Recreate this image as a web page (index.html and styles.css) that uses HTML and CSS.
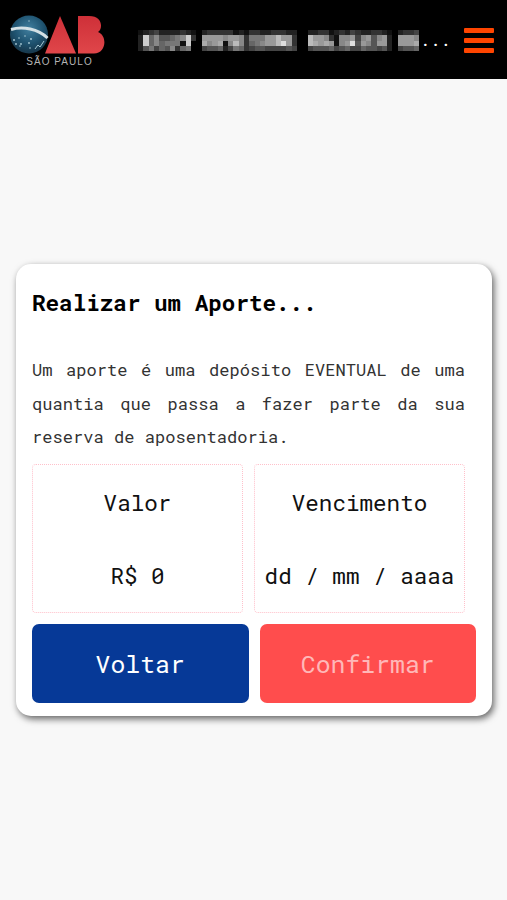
FILE: index.html
```html
<!DOCTYPE html>
<html lang="pt-BR">
<head>
    <meta charset="UTF-8">
    <meta name="viewport" content="width=device-width, initial-scale=1.0">
    <title>OAB São Paulo - Aporte</title>
    <link rel="stylesheet" href="styles.css">
</head>
<body>
    <header class="topbar">
        <div class="logo">
            <svg class="logo-mark" width="96" height="42" viewBox="0 0 96 42">
                <defs>
                    <radialGradient id="globe" cx="0.5" cy="0.35" r="0.6">
                        <stop offset="0" stop-color="#417f9f"/>
                        <stop offset="0.65" stop-color="#1e526f"/>
                        <stop offset="1" stop-color="#183b50"/>
                    </radialGradient>
                    <linearGradient id="red" x1="0" y1="0" x2="0" y2="1">
                        <stop offset="0" stop-color="#ce3038"/>
                        <stop offset="1" stop-color="#e0464a"/>
                    </linearGradient>
                </defs>
                <circle cx="20" cy="20.500" r="19" fill="url(#globe)"/>
                <path d="M2 15.500C14 12 29 15 38.500 24" fill="none" stroke="#d3e0e5" stroke-width="3"/>
                <g fill="#a8cad6">
                    <circle cx="5" cy="26" r="1"/><circle cx="7" cy="30" r="0.9"/><circle cx="12" cy="30" r="0.9"/>
                    <circle cx="10" cy="24" r="0.8"/><circle cx="16" cy="22" r="0.8"/><circle cx="20" cy="29" r="0.9"/>
                    <circle cx="22" cy="25" r="1"/><circle cx="11" cy="32" r="0.8"/><circle cx="21" cy="34" r="0.8"/>
                    <circle cx="20" cy="7" r="0.7"/>
                </g>
                <path d="M26 35l3-4 2 2 4-6" fill="none" stroke="#a8cad6" stroke-width="1"/>
                <polygon points="51,2 67,39.500 36,39.500" fill="url(#red)"/>
                <path d="M69 2H80C94 2 94 15 89 18C99 22 97 39.500 85 39.500H69Z" fill="url(#red)"/>
            </svg>
            <span class="logo-city">SÃO PAULO</span>
        </div>
        <div class="user">
            <svg class="user-name" id="userName" width="282" height="22" shape-rendering="crispEdges"></svg>
            <span class="user-more">...</span>
        </div>
        <div class="menu"><span></span><span></span><span></span></div>
    </header>

    <main class="content">
        <section class="card">
            <h1>Realizar um Aporte...</h1>
            <p>Um aporte é uma depósito EVENTUAL de uma quantia que passa a fazer parte da sua reserva de aposentadoria.</p>
            <div class="fields">
                <div class="field">
                    <label>Valor</label>
                    <span>R$ 0</span>
                </div>
                <div class="field">
                    <label>Vencimento</label>
                    <span>dd / mm / aaaa</span>
                </div>
            </div>
            <div class="buttons">
                <button class="btn-back">Voltar</button>
                <button class="btn-confirm">Confirmar</button>
            </div>
        </section>
    </main>

    <script>
        // Pixelated user name, one hex digit of grey per cell
        const rows = [
            '12342222321 233333121332233322  2233123243223321 2334',
            '2c6855678c3 99998998377799b993  b998318894895892 9998',
            '2c6867771c0 a89a18b8367899bd93  ba9a9189d5985992 999a',
            '25746583670 455624763455444454  4555645644655452 4556'
        ];
        let cells = '';
        rows.forEach((row, y) => {
            [...row].forEach((c, x) => {
                if (c === ' ') return;
                cells += `<rect x="${x * 5.3}" y="${y * 5.3}" width="5.3" height="5.3" fill="#${c}${c}${c}"/>`;
            });
        });
        document.getElementById('userName').innerHTML = cells;
    </script>
</body>
</html>
```
FILE: styles.css
```css
* {
    box-sizing: border-box;
}
body {
    margin: 0;
    min-height: 100vh;
    background-color: #f8f8f8;
    font-family: "Roboto Mono", "DejaVu Sans Mono", monospace;
    display: flex;
    flex-direction: column;
}
.topbar {
    height: 79px;
    background: #000;
    display: flex;
    align-items: flex-start;
    padding: 14px 13px 0 9px;
}
.logo {
    width: 96px;
    height: 56px;
}
.logo-mark {
    display: block;
}
.logo-city {
    display: block;
    width: 101px;
    text-align: center;
    font: 10px/12px "Liberation Sans", Arial, sans-serif;
    letter-spacing: 1.05px;
    color: #b4b4b4;
}
.user {
    flex: 1;
    display: flex;
    height: 37px;
    padding-left: 33px;
}
.user-name {
    width: 282px;
    flex-shrink: 0;
    margin-top: 16px;
    filter: blur(0.5px);
}
.user-more {
    color: #fff;
    font-size: 17px;
    line-height: 52px;
}
.menu {
    width: 30px;
    padding-top: 14px;
    display: flex;
    flex-direction: column;
    gap: 5px;
}
.menu span {
    height: 5px;
    border-radius: 1px;
    background: #ff4500;
}
.content {
    padding: 185px 15px 0 16px;
}
.card {
    height: 452px;
    background: #fff;
    border-radius: 15px;
    padding: 15px 16px;
    box-shadow: 2px 3px 7px rgba(0, 0, 0, 0.6);
}
h1 {
    margin: 0;
    font-size: 22.6px;
    line-height: 46px;
    color: #000;
}
p {
    margin: 28px 11px 0 0;
    font-size: 17.1px;
    line-height: 33.6px;
    text-align: justify;
    color: #333;
}
.fields {
    display: flex;
    gap: 11px;
    margin: 10px 11px 0 0;
}
.field {
    width: 211px;
    height: 149px;
    padding-top: 1px;
    border: 1px dotted #ffc0ca;
    border-radius: 4px;
    display: flex;
    flex-direction: column;
    align-items: center;
    font-size: 22.6px;
    line-height: 73px;
    color: #111;
}
.buttons {
    display: flex;
    gap: 11px;
    margin-top: 11px;
}
.buttons button {
    flex: 1;
    height: 79px;
    border: none;
    border-radius: 7px;
    padding: 0;
    font-family: inherit;
    font-size: 24.8px;
    color: #fff;
}
.btn-back {
    background: #063997;
}
.buttons .btn-confirm {
    background: #ff4d4d;
    color: #ffb8b8;
}
```
